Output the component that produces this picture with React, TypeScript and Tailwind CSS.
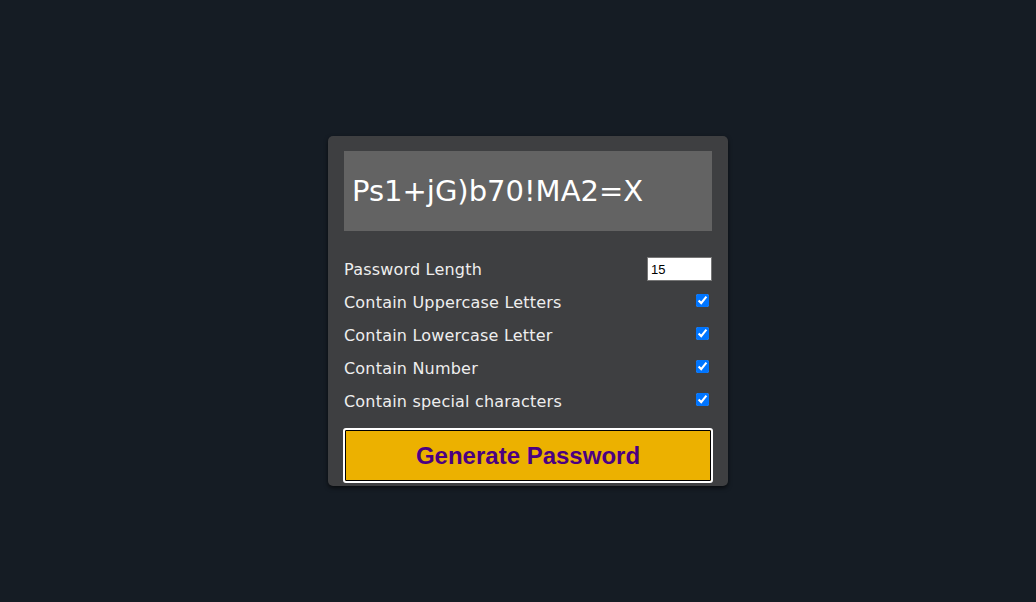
export default function App() {
  const options = [
    "Contain Uppercase Letters",
    "Contain Lowercase Letter",
    "Contain Number",
    "Contain special characters",
  ];

  return (
    <div className="flex min-h-[602px] w-full items-start justify-center bg-[#151c24] pl-5 pt-[136px] font-['DejaVu_Sans',sans-serif]">
      <div className="w-[400px] rounded-[5px] bg-[#3e3f41] px-4 pb-[3px] pt-[15px] shadow-[0_2px_4px_rgba(0,0,0,0.6)]">
        {/* Resultado */}
        <div className="flex h-[80px] items-center bg-[#636363] px-2">
          <span className="text-[29px] leading-none text-white">Ps1+jG)b70!MA2=X</span>
        </div>

        <div className="mt-[27px] flex flex-col">
          <div className="flex h-[24px] items-center justify-between">
            <label className="text-[16px] tracking-[0.2px] text-[#eeeeee]">Password Length</label>
            <input
              type="number"
              defaultValue={15}
              className="-mt-[2px] h-[24px] w-[65px] border border-[#767676] bg-white px-[3px] font-['Liberation_Sans',sans-serif] text-[13px] text-black"
            />
          </div>
          {options.map((o) => (
            <div key={o} className="mt-[9px] flex h-[24px] items-center justify-between">
              <label className="text-[16px] tracking-[0.2px] text-[#eeeeee]">{o}</label>
              <input type="checkbox" defaultChecked className="mr-[3px] mt-[3px] h-[13px] w-[13px] self-start" />
            </div>
          ))}
        </div>

        <button className="mt-[14px] flex h-[55px] w-[370px] -ml-px items-center justify-center rounded-[3px] border-2 border-white bg-[#ecb100] font-['Liberation_Sans',sans-serif] text-[24px] font-bold text-[#4b0082] shadow-[0_0_0_1px_#000_inset]">
          Generate Password
        </button>
      </div>
    </div>
  );
}
